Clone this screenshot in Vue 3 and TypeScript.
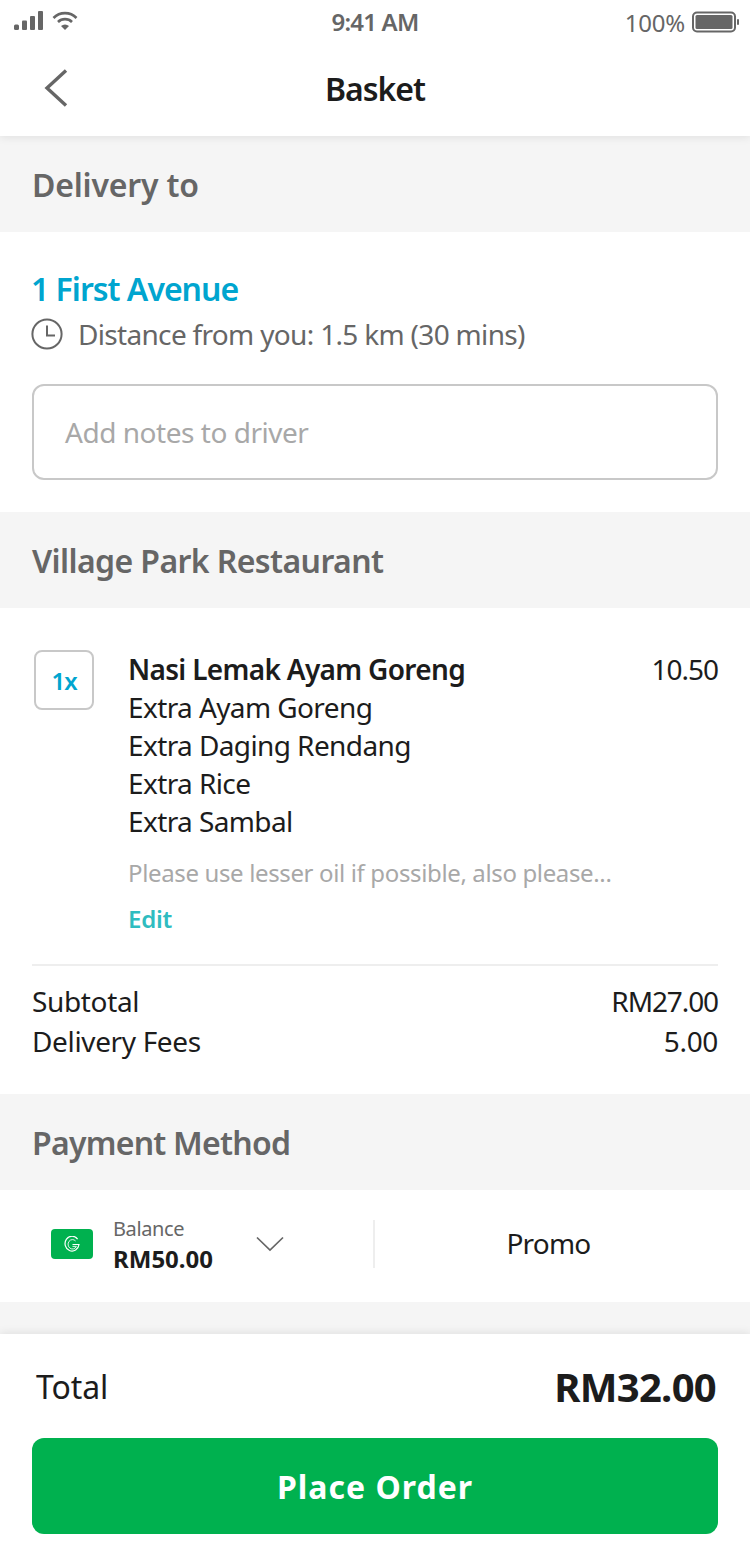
<script setup lang="ts">
const extras: string[] = ['Extra Ayam Goreng', 'Extra Daging Rendang', 'Extra Rice', 'Extra Sambal']
</script>

<template>
  <div class="page">
    <header class="top">
      <div class="status">
        <div class="status-left">
          <svg width="30" height="20" viewBox="0 0 30 20" class="signal">
            <rect x="0" y="13.5" width="5" height="5.5" rx="1.5" fill="#666" />
            <rect x="8" y="9.5" width="5" height="9.5" rx="1" fill="#666" />
            <rect x="16" y="5" width="5" height="14" rx="1" fill="#666" />
            <rect x="24" y="0" width="5" height="19" rx="1" fill="#666" />
          </svg>
          <svg width="26" height="20" viewBox="0 0 26 20" class="wifi">
            <path d="M1.5 7 A16 16 0 0 1 24.5 7" fill="none" stroke="#666" stroke-width="2.6" />
            <path d="M6 11 A10 10 0 0 1 20 11" fill="none" stroke="#666" stroke-width="2.6" />
            <path d="M9 15 L13 19 L17 15 A6 6 0 0 0 9 15 Z" fill="#666" />
          </svg>
        </div>
        <div class="status-time">9:41 AM</div>
        <div class="status-right">
          <span>100%</span>
          <svg width="48" height="22" viewBox="0 0 48 22">
            <rect x="1" y="1.5" width="42" height="19" rx="4" fill="none" stroke="#666" stroke-width="2" />
            <rect x="3.5" y="4" width="37" height="14" rx="1.5" fill="#666" />
            <rect x="45" y="8" width="2" height="6" rx="1" fill="#666" />
          </svg>
        </div>
      </div>
      <nav class="nav">
        <svg class="back" width="24" height="38" viewBox="0 0 24 38">
          <path d="M22 1.5 L3 19 L22 36.5" fill="none" stroke="#666" stroke-width="3.4" />
        </svg>
        <h1>Basket</h1>
      </nav>
    </header>

    <section>
      <h2 class="band first">Delivery to</h2>
      <div class="delivery">
        <div class="address">1 First Avenue</div>
        <div class="distance">
          <svg width="32" height="32" viewBox="0 0 32 32">
            <circle cx="16" cy="16" r="14.6" fill="none" stroke="#666" stroke-width="2" />
            <path d="M16 7.5 V17.5 H24" fill="none" stroke="#666" stroke-width="2" />
          </svg>
          <span>Distance from you: 1.5 km (30 mins)</span>
        </div>
        <div class="notes">Add notes to driver</div>
      </div>
    </section>

    <section>
      <h2 class="band">Village Park Restaurant</h2>
      <div class="order">
        <div class="item">
          <div class="qty">1x</div>
          <div class="item-body">
            <div class="item-head">
              <strong>Nasi Lemak Ayam Goreng</strong>
              <span class="price">10.50</span>
            </div>
            <div v-for="e in extras" :key="e" class="extra">{{ e }}</div>
            <div class="remark">Please use lesser oil if possible, also please...</div>
            <div class="edit">Edit</div>
          </div>
        </div>
        <div class="totals">
          <div class="line"><span>Subtotal</span><span class="amount">RM27.00</span></div>
          <div class="line"><span>Delivery Fees</span><span>5.00</span></div>
        </div>
      </div>
    </section>

    <section>
      <h2 class="band payment">Payment Method</h2>
      <div class="pay">
        <div class="wallet">
          <div class="gbadge">
            <svg width="16" height="17" viewBox="0 0 16 17">
              <path d="M13.6 3.1 A7 7.4 0 1 0 15 8.5 H8.5" fill="none" stroke="#fff" stroke-width="1.2" />
              <path d="M11.6 5 A4.4 4.7 0 1 0 12.4 10.4 H8.5" fill="none" stroke="#dff5e9" stroke-width="1" />
            </svg>
          </div>
          <div class="balance">
            <span>Balance</span>
            <strong>RM50.00</strong>
          </div>
          <svg class="chev" width="28" height="16" viewBox="0 0 28 16">
            <path d="M1 1.5 L14 14 L27 1.5" fill="none" stroke="#666" stroke-width="1.7" />
          </svg>
        </div>
        <div class="promo">Promo</div>
      </div>
    </section>

    <div class="gap"></div>

    <footer class="footer">
      <div class="total">
        <span>Total</span>
        <strong>RM32.00</strong>
      </div>
      <button class="place" type="button">Place Order</button>
    </footer>
  </div>
</template>

<style>
html, body { margin: 0; background: #fff; }
</style>

<style scoped>
.page {
  width: 750px;
  height: 1566px;
  overflow: hidden;
  background: #fff;
  font-family: "Noto Sans", "Open Sans", sans-serif;
  color: #1c1c1c;
  display: flex;
  flex-direction: column;
}
.top { height: 136px; position: relative; z-index: 1; box-shadow: 0 2px 8px rgba(0,0,0,.08); background: #fff; }
.status { height: 44px; display: flex; align-items: center; justify-content: space-between; padding: 0 10px 0 14px; color: #666; position: relative; }
.status-left { display: flex; align-items: flex-start; gap: 8px; margin-top: -3px; }
.status-time { position: absolute; left: 0; right: 0; text-align: center; font-size: 24px; font-weight: 600; top: 5px; letter-spacing: -0.8px; }
.status-right { display: flex; align-items: center; gap: 7px; font-size: 24px; letter-spacing: -0.2px; }
.nav { height: 92px; display: flex; align-items: center; justify-content: center; position: relative; }
.back { position: absolute; left: 44px; top: 25px; }
h1 { margin: -2px 0 0; font-size: 32px; font-weight: 600; line-height: 1; letter-spacing: -1px; }
.band { margin: 0; height: 96px; background: #f5f5f5; display: flex; align-items: center; padding: 0 32px; font-size: 32px; font-weight: 600; color: #666; letter-spacing: -0.6px; }
.band.first { letter-spacing: -0.2px; }
.band.payment { letter-spacing: -0.75px; }
.delivery { padding: 36px 32px 32px; }
.address { font-size: 32px; font-weight: 600; color: #00a5cf; line-height: 42px; letter-spacing: -1px; margin-left: -1px; }
.distance { display: flex; align-items: center; gap: 15px; margin-top: 1px; margin-left: -1px; font-size: 28px; color: #666; height: 46px; letter-spacing: -0.68px; }
.notes { margin-top: 27px; height: 96px; box-sizing: border-box; border: 2px solid #c8c8c8; border-radius: 12px; display: flex; align-items: center; padding: 0 31px; font-size: 28px; color: #a8a8a8; letter-spacing: -0.47px; }
.order { padding: 42px 32px 0; }
.item { display: flex; }
.qty { width: 60px; height: 60px; box-sizing: border-box; margin-left: 2px; border: 2px solid #c8c8c8; border-radius: 8px; color: #00a5cf; font-size: 24px; font-weight: 600; letter-spacing: -1.2px; display: flex; align-items: center; justify-content: center; }
.item-body { flex: 1; margin-left: 34px; }
.item-head { display: flex; justify-content: space-between; font-size: 28px; line-height: 38px; letter-spacing: -0.68px; }
.item-head strong { font-weight: 600; }
.price { letter-spacing: -1px; }
.extra { font-size: 28px; line-height: 38px; letter-spacing: -0.6px; }
.remark { margin-top: 16px; font-size: 24px; line-height: 34px; color: #a8a8a8; letter-spacing: -0.36px; }
.edit { margin-top: 12px; font-size: 24px; line-height: 34px; font-weight: 600; color: #2fbcc0; letter-spacing: -0.2px; }
.totals { margin-top: 28px; border-top: 2px solid #eee; padding-top: 15px; padding-bottom: 33px; }
.line { display: flex; justify-content: space-between; font-size: 28px; line-height: 40px; letter-spacing: -0.35px; }
.amount { letter-spacing: -1.1px; }
.pay { height: 112px; display: flex; align-items: center; box-sizing: border-box; padding-bottom: 4px; }
.wallet { width: 375px; height: 48px; display: flex; align-items: center; border-right: 2px solid #eee; box-sizing: border-box; padding-left: 51px; }
.gbadge { width: 42px; height: 30px; border-radius: 4px; background: #00b14f; display: flex; align-items: center; justify-content: center; }
.balance { margin-left: 20px; margin-top: 2px; display: flex; flex-direction: column; }
.balance span { font-size: 20px; line-height: 28px; color: #666; letter-spacing: -0.4px; }
.balance strong { font-size: 24px; line-height: 32px; font-weight: 700; letter-spacing: 0; }
.chev { margin-left: 43px; }
.promo { flex: 1; text-align: center; font-size: 28px; letter-spacing: -0.8px; padding-right: 28px; margin-top: -3px; }
.gap { height: 32px; background: #f5f5f5; flex: none; }
.footer { flex: 1; position: relative; background: #fff; padding: 0 32px; box-shadow: 0 -2px 8px rgba(0,0,0,.08); }
.total { height: 104px; display: flex; align-items: center; justify-content: space-between; padding: 1px 2px 0 4px; box-sizing: border-box; }
.total span { font-size: 32px; letter-spacing: -0.1px; }
.total strong { font-size: 40px; font-weight: 700; letter-spacing: -0.7px; }
.place { display: block; width: 100%; height: 96px; border: 0; border-radius: 12px; background: #00b14f; color: #fff; font-family: inherit; font-size: 32px; font-weight: 700; letter-spacing: 1px; }
</style>
